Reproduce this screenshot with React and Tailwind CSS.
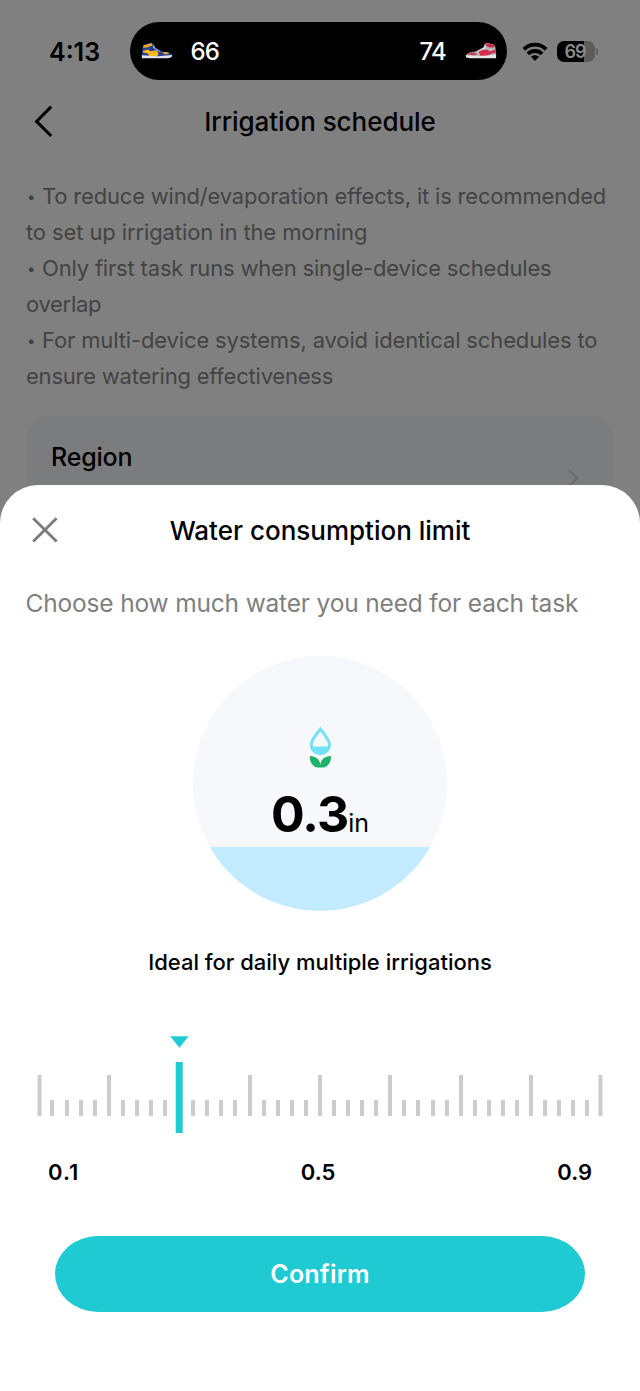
const TICKS = Array.from({ length: 41 }, (_, i) => i);
const SELECTED = 10;

function BlueSneaker() {
  return (
    <svg className="h-[18px] w-8 shrink-0" viewBox="0 0 32 18">
      <path d="M0.8 12.5 L1.5 5.5 L3 2.8 L10.5 0.8 L13 2.2 L13.5 5 L21 9.5 L28 10.6 L31 12.6 L30.8 15 L1 15.2 Z" fill="#27408f" />
      <path d="M2.2 3.6 L10.6 1 L11.5 3.6 L6 5.4 L2.2 5.8 Z" fill="#e9a52a" />
      <path d="M2 9 L7 7.6 L9.5 9.2 L15.5 8.2 L17.5 11.5 L16.5 14.2 L8.5 14.2 L6.6 11.2 L2 10.6 Z" fill="#fab81d" />
      <path d="M20.4 10.6 L25.5 9.9 L28.4 11 L24.5 12.4 Z" fill="#f0ad24" />
      <path d="M11.6 3.2 L13.4 4 L14.4 6.2 L20 9.6 L17.4 9.4 L12.4 6 Z" fill="#a9b2d4" />
      <path d="M0.7 13.3 L17 14.2 L31.2 13 L30.4 15.3 L27 16.3 L1 16.2 Z" fill="#e2e4ef" />
    </svg>
  );
}

function RedSneaker() {
  return (
    <svg className="h-[18px] w-8 shrink-0" viewBox="0 0 32 18">
      <path d="M31 12.8 L30.4 5.2 L28.8 2.6 L21.4 0.8 L19.4 2.4 L18.6 5.2 L10.6 9.4 L3.6 10.8 L0.8 13.4 L1 15.2 L31 15.2 Z" fill="#b9b7b9" />
      <path d="M20.4 1 L29 2.6 L29.4 5.6 L24.6 5.4 L21 4 Z" fill="#c62f49" />
      <path d="M15 8.4 L22 7.6 L25 9.6 L30.4 7.4 L30.6 10.4 L25.6 12 L23 13.8 L15.6 13.8 L13.8 10.6 Z" fill="#d42c4a" />
      <path d="M2 12.2 L4.4 10.8 L9.6 10.4 L12.4 12.8 L8 13.2 Z" fill="#c73c54" />
      <path d="M20.2 3 L18.8 5.8 L12.4 9.2 L15.6 8.6 L20.4 6.2 Z" fill="#e6e2e4" />
      <path d="M0.7 13.4 L14 14.2 L31.2 12.8 L31 16.2 L5 16.2 L1.4 15.4 Z" fill="#e9e5e7" />
    </svg>
  );
}

function Wifi() {
  return (
    <svg className="h-[19px] w-[26px] shrink-0" viewBox="0 0 26 19">
      <g fill="none" stroke="#000" strokeWidth="3.9">
        <path d="M1.9 7.3 C8 1.1 18 1.1 24.1 7.3" />
        <path d="M5.9 11.8 C9.8 8 16.2 8 20.1 11.8" />
      </g>
      <path d="M9 14.8 C11.2 12.8 14.8 12.8 17 14.8 L13 18.9 Z" fill="#000" />
    </svg>
  );
}

function Battery() {
  return (
    <div className="flex items-center gap-px">
      <div className="flex h-[21px] w-[38px] items-center justify-center rounded-[7px] bg-linear-to-r from-black from-70% to-[#5c5c5c] to-70% pr-[2px]">
        <span className="text-[18px] leading-none font-semibold tracking-[-0.9px] text-[#8c8c8c]">69</span>
      </div>
      <div className="h-[7px] w-[2px] rounded-r-full bg-[#5c5c5c]" />
    </div>
  );
}

function StatusBar() {
  return (
    <div className="flex h-[58px] items-center">
      <div className="w-[130px] pt-[3px] pl-[49px] text-[25px] font-semibold">4:13</div>
      <div className="flex h-[58px] w-[377px] items-center justify-between rounded-full bg-black px-[10.5px] text-[24px] font-medium tracking-[-0.8px] text-white">
        <div className="flex items-center gap-[18px]">
          <BlueSneaker />
          <span className="pt-[2px]">66</span>
        </div>
        <div className="flex items-center gap-[18.5px]">
          <span className="pt-[2px]">74</span>
          <RedSneaker />
        </div>
      </div>
      <div className="flex items-center gap-[9px] pt-px pl-[15px]">
        <Wifi />
        <Battery />
      </div>
    </div>
  );
}

function Dot() {
  return <span className="inline-block w-4 pl-px align-[2px] text-[15px] leading-none">•</span>;
}

function Notes() {
  return (
    <div className="mt-[33px] flex flex-col px-[26px] text-[22px] leading-9 whitespace-nowrap text-[#434343]">
      <p className="tracking-[-0.19px]"><Dot />To reduce wind/evaporation effects, it is recommended</p>
      <p className="tracking-[-0.11px]">to set up irrigation in the morning</p>
      <p className="tracking-[-0.18px]"><Dot />Only first task runs when single-device schedules</p>
      <p className="tracking-[-0.3px]">overlap</p>
      <p className="tracking-[-0.14px]"><Dot />For multi-device systems, avoid identical schedules to</p>
      <p className="tracking-[-0.22px]">ensure watering effectiveness</p>
    </div>
  );
}

function Tick({ index }) {
  if (index === SELECTED) {
    return <div className="h-[71px] w-[7px] -translate-x-[0.3px] bg-[#1fcad3]" />;
  }
  const edge = index === 0 ? "translate-x-[1.5px]" : index === 40 ? "-translate-x-[1.5px]" : "";
  const size = index % 5 === 0 ? "h-[41px]" : "h-4 mt-[25px]";
  return <div className={`w-1 bg-[#cccccc] ${size} ${edge}`} />;
}

function Ruler() {
  return (
    <div className="flex h-[71px] w-[577.3px] items-start self-center">
      {TICKS.map((i) => (
        <div key={i} className={i === SELECTED ? "flex flex-1 justify-center" : "flex flex-1 justify-center pt-[13px]"}>
          <Tick index={i} />
        </div>
      ))}
    </div>
  );
}

export default function App() {
  return (
    <div className="flex h-[1391px] w-[640px] flex-col overflow-hidden bg-[#808080] font-['Inter',sans-serif] text-black">
      <div className="h-[485px] shrink-0 pt-[22.4px]">
        <StatusBar />
        <header className="mt-[16.6px] grid h-12 grid-cols-[170px_1fr_170px] items-center">
          <svg className="ml-[33px] h-8 w-5" viewBox="0 0 20 32" fill="none" stroke="#000" strokeWidth="3">
            <path d="M18.2 1.6 L3.6 16.4 L18.2 31" />
          </svg>
          <h1 className="pt-[2px] text-center text-[26px] font-medium tracking-[-0.05px] whitespace-nowrap">Irrigation schedule</h1>
        </header>
        <Notes />
        <div className="mx-[26px] mt-[22px] flex h-[126px] justify-between rounded-[24px] bg-[#7b7c7e] pr-[35px] pl-[25px]">
          <div className="pt-[23px] text-[25px] leading-9 font-medium tracking-[-0.2px]">Region</div>
          <svg className="mt-[52px] h-5 w-3" viewBox="0 0 12 20" fill="none" stroke="#6b6b6c" strokeWidth="2">
            <path d="M2 2 L10.5 10 L2 18" />
          </svg>
        </div>
      </div>

      <section className="relative flex flex-1 flex-col rounded-t-[38px] bg-white">
        <div className="mt-[21px] grid h-12 grid-cols-[150px_1fr_150px] items-center">
          <svg className="ml-8 h-[26px] w-[26px]" viewBox="0 0 26 26" fill="none" stroke="#7b7b7b" strokeWidth="2.8">
            <path d="M1.2 1.2 L24.6 24.6 M24.6 1.2 L1.2 24.6" />
          </svg>
          <h2 className="text-center text-[26px] font-medium whitespace-nowrap">Water consumption limit</h2>
        </div>
        <p className="mt-[31px] px-[25.5px] text-[24.5px] leading-9 tracking-[-0.17px] whitespace-nowrap text-[#7f7f7f]">
          Choose how much water you need for each task
        </p>

        <div className="mt-[35px] flex h-[255px] w-[254px] flex-col items-center self-center overflow-hidden rounded-full bg-linear-to-b from-[#f6f8fc] from-75% to-[#c3ebff] to-75%">
          <svg className="mt-[69px] h-[44px] w-6 shrink-0" viewBox="0 0 24 44">
            <path d="M12.4 1.6 C9.5 6 1.8 14.2 1.8 19.6 C1.8 25.8 6.6 30 12.4 30 C18.2 30 23 25.8 23 19.6 C23 14.2 15.3 6 12.4 1.6 Z M12.4 6.6 C15.2 10.4 20 16.6 20 19.4 C20 20.8 19.8 21.6 19.2 21.6 H5.6 C5 21.6 4.8 20.8 4.8 19.4 C4.8 16.6 9.6 10.4 12.4 6.6 Z" fill="#73e2f7" fillRule="evenodd" />
            <path d="M1.7 31 C7.4 31 12.4 34.4 12.4 40.6 C12.4 34.4 17.4 31 23.1 31 C23.1 38 19.4 42.6 14.6 42.6 H10.2 C5.4 42.6 1.7 38 1.7 31 Z" fill="#1db266" />
          </svg>
          <div className="mt-[15px] flex items-baseline leading-[60px]">
            <span className="text-[50px] font-bold tracking-[-0.9px]">0.3</span>
            <span className="text-[25px]">in</span>
          </div>
        </div>

        <p className="mt-[33px] text-center text-[22px] leading-9 font-medium">Ideal for daily multiple irrigations</p>

        <svg className="mt-[56px] ml-[169.5px] h-3 w-[19px]" viewBox="0 0 19 12">
          <path d="M0.2 0.2 H18.6 L9.4 11.8 Z" fill="#1fcad3" />
        </svg>
        <div className="mt-[14px] flex flex-col">
          <Ruler />
        </div>
        <div className="mt-[21px] flex justify-between px-[48px] text-[22px] leading-9 font-semibold">
          <span className="w-[35px] tracking-[1px]">0.1</span>
          <span className="-translate-x-[2px]">0.5</span>
          <span>0.9</span>
        </div>
        <button className="mt-[45.5px] h-[76px] w-[530px] self-center rounded-[43px/38px] bg-[#1fcad3] pt-[2px] text-[25px] font-semibold tracking-[0.2px] text-white">
          Confirm
        </button>
      </section>
    </div>
  );
}
